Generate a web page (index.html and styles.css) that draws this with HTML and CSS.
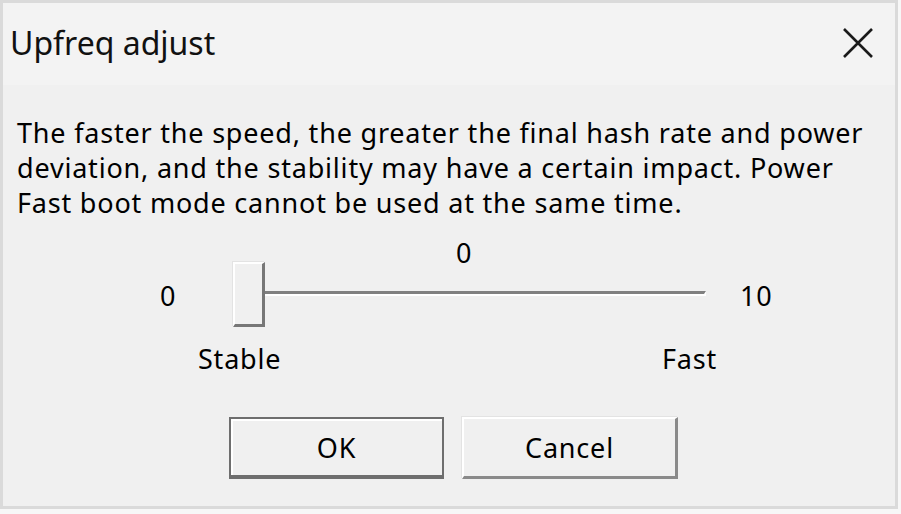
FILE: index.html
```html
<!DOCTYPE html>
<html lang="en">
<head>
    <meta charset="UTF-8">
    <title>Upfreq adjust</title>
    <link rel="stylesheet" href="styles.css">
</head>
<body>
    <div class="window">
        <div class="titlebar">
            <span class="title">Upfreq adjust</span>
            <svg class="close" width="30" height="30" viewBox="0 0 30 30">
                <path d="M1 1 L29 29 M29 1 L1 29" stroke="#1a1a1a" stroke-width="2.6" fill="none"/>
            </svg>
        </div>

        <div class="content">
            <p class="message">
                The faster the speed, the greater the final hash rate and power<br>
                deviation, and the stability may have a certain impact. Power<br>
                Fast boot mode cannot be used at the same time.
            </p>

            <div class="slider">
                <div class="slider-value">0</div>
                <div class="slider-row">
                    <span class="slider-min">0</span>
                    <div class="track">
                        <div class="channel"></div>
                        <div class="thumb"></div>
                    </div>
                    <span class="slider-max">10</span>
                </div>
                <div class="slider-labels">
                    <span>Stable</span>
                    <span>Fast</span>
                </div>
            </div>

            <div class="buttons">
                <button class="btn default">OK</button>
                <button class="btn">Cancel</button>
            </div>
        </div>
    </div>
</body>
</html>
```

FILE: styles.css
```css
body {
    margin: 0;
    background: #f7f7f7;
    font-family: "Noto Sans", "Open Sans", sans-serif;
    color: #000;
}
.window {
    width: 892px;
    height: 503px;
    border: 3px solid #dadada;
    background: #f0f0f0;
}
.titlebar {
    height: 82px;
    background: #f3f3f3;
    display: flex;
    align-items: center;
    justify-content: space-between;
    padding: 0 22px 0 7px;
}
.title {
    font-size: 32px;
    padding-bottom: 4px;
    color: #111;
}
.close {
    margin-bottom: 2px;
}
.content {
    padding: 30px 14px 0 14px;
    font-size: 27px;
    letter-spacing: 0.8px;
}
.message {
    margin: 0;
    line-height: 35px;
}
.slider {
    margin: 15px 0 0 131px;
    width: 640px;
}
.slider-value {
    line-height: 36px;
    width: 473px;
    margin-left: 85px;
    padding-right: 11px;
    box-sizing: border-box;
    text-align: center;
}
.slider-row {
    display: flex;
    align-items: center;
    height: 65px;
    margin-top: -10px;
    padding-top: 4px;
    box-sizing: border-box;
}
.slider-min {
    width: 40px;
    text-align: center;
    margin-right: 45px;
}
.track {
    position: relative;
    width: 473px;
    height: 65px;
}
.channel {
    position: absolute;
    left: 0;
    right: 0;
    top: 28px;
    height: 0;
    border-top: 3px solid #808080;
    border-bottom: 2px solid #fff;
    border-right: 2px solid #fff;
}
.thumb {
    position: absolute;
    left: 0;
    top: -1px;
    width: 32px;
    height: 65px;
    box-sizing: border-box;
    background: #f0f0f0;
    border-style: solid;
    border-width: 2px 3px 3px 2px;
    border-color: #fff #777 #777 #fff;
    box-shadow: -1px -1px 0 #e3e3e3;
}
.slider-max {
    margin-left: 34px;
}
.slider-labels {
    display: flex;
    justify-content: space-between;
    width: 519px;
    margin: 15px 0 0 50px;
    line-height: 36px;
}
.buttons {
    display: flex;
    gap: 18px;
    margin: 40px 0 0 212px;
}
.btn {
    width: 216px;
    height: 62px;
    font-family: inherit;
    font-size: 27px;
    letter-spacing: 0.8px;
    color: #000;
    background: #f0f0f0;
    border-style: solid;
    border-width: 2px 3px 3px 2px;
    border-color: #fff #8a8a8a #8a8a8a #fff;
    box-shadow: -1px -1px 0 #e3e3e3;
    padding: 0;
}
.btn.default {
    width: 215px;
    border: 2px solid #6e6e6e;
    border-bottom-width: 4px;
    box-shadow: inset 2px 2px 0 #fff;
}
```
